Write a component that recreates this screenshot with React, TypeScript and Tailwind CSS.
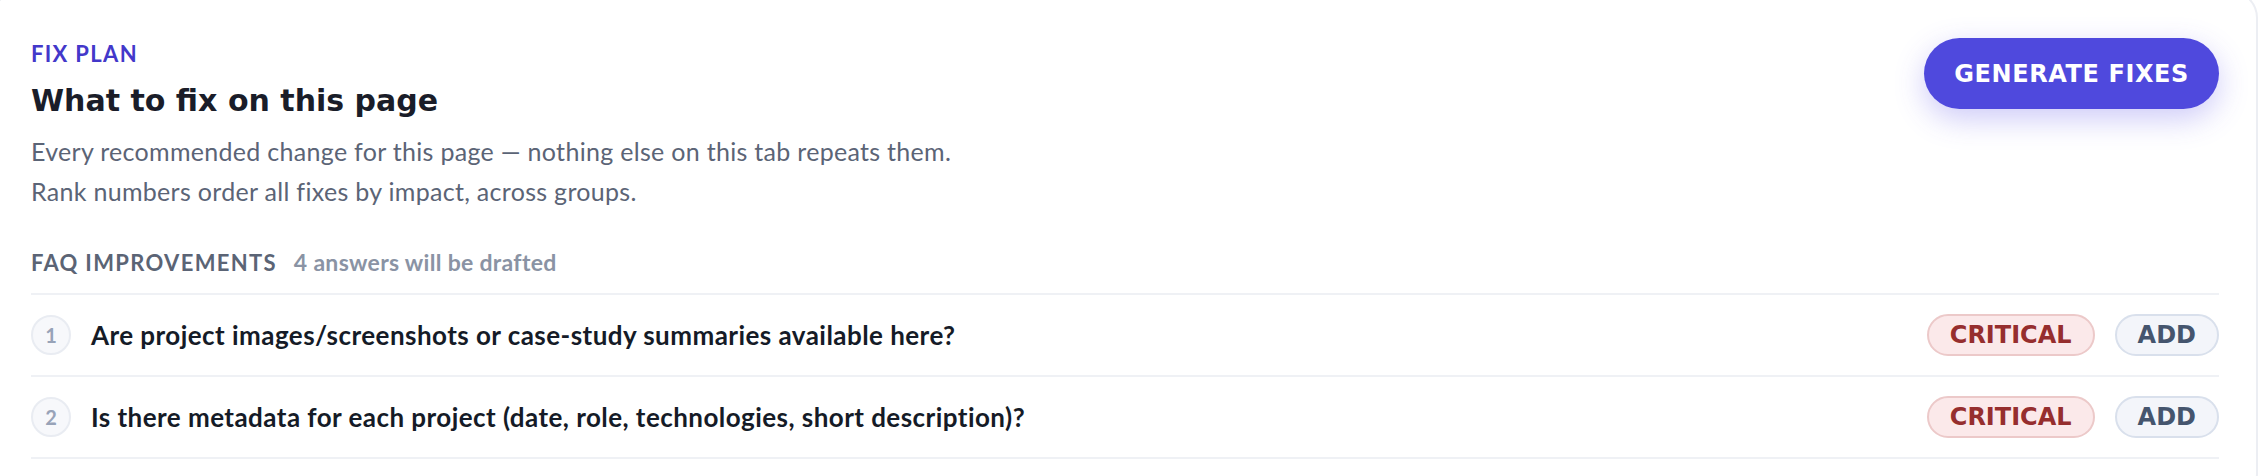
const questions = [
  {
    rank: 1,
    text: 'Are project images/screenshots or case-study summaries available here?',
    priority: 'critical',
    action: 'ADD',
  },
  {
    rank: 2,
    text: 'Is there metadata for each project (date, role, technologies, short description)?',
    priority: 'critical',
    action: 'ADD',
  },
];

const priorityStyles: Record<string, string> = {
  critical: 'bg-[#fbe9ea] border-[#ecc9c9] text-[#962e2e]',
  important: 'bg-[#fdf4e3] border-[#f0dcb8] text-[#946015]',
};

const Badge = ({ label, className }: { label: string; className: string }) => (
  <span
    className={`flex h-[42px] items-center rounded-full border-2 px-[21px] font-['DejaVu_Sans',sans-serif] text-[24px] font-bold leading-none ${className}`}
  >
    {label}
  </span>
);

const App = () => {
  return (
    <div className="h-[476px] overflow-hidden bg-white">
      <div className="-ml-[8px] -mt-[10px] w-[calc(100%+8px)] rounded-[28px] border-2 border-[#eceef3] bg-white px-[37px] pt-[48px] pb-[40px]">
        <div className="flex items-start justify-between">
          <div>
            <p className="font-['Lato',sans-serif] text-[22px] font-bold uppercase leading-[28px] tracking-[0.06em] text-[#4338ca]">
              Fix plan
            </p>
            <h2 className="mt-[15px] font-['DejaVu_Sans',sans-serif] text-[30px] font-bold leading-[36px] text-[#1a1d29]">
              What to fix on this page
            </h2>
            <div className="mt-[12px] font-['Lato',sans-serif] text-[25px] leading-[40px] tracking-[0.3px] text-[#5b6476]">
              <p>Every recommended change for this page — nothing else on this tab repeats them.</p>
              <p>Rank numbers order all fixes by impact, across groups.</p>
            </div>
          </div>
          <button className="-mt-[2px] h-[71px] rounded-full bg-[#4f49dd] px-[30px] font-['DejaVu_Sans',sans-serif] text-[24px] font-bold tracking-[0.6px] text-white shadow-[0_10px_30px_rgba(79,70,229,0.28)]">
            GENERATE FIXES
          </button>
        </div>

        <div className="mt-[37px]">
          <div className="flex items-baseline pb-[16px] font-['Lato',sans-serif] font-bold leading-[28px]">
            <span className="text-[22px] uppercase tracking-[0.06em] text-[#5b6475]">FAQ Improvements</span>
            <span className="ml-[17px] text-[23px] tracking-[0.3px] text-[#8a93a4]">4 answers will be drafted</span>
          </div>

          {questions.map((q) => (
            <div
              key={q.rank}
              className="flex h-[82px] items-center border-t-2 border-[#eff1f5] last:h-[84px] last:border-b-2"
            >
              <span className="flex h-[40px] w-[40px] shrink-0 items-center justify-center rounded-full border-2 border-[#e9ecf2] bg-[#f7f8fb] font-['Lato',sans-serif] text-[20px] font-bold text-[#98a3b8]">
                {q.rank}
              </span>
              <p className="ml-[20px] font-['Lato',sans-serif] text-[26px] font-bold leading-[34px] tracking-[0.45px] text-[#151b27]">
                {q.text}
              </p>
              <div className="ml-auto flex gap-[20px]">
                <Badge label={q.priority.toUpperCase()} className={priorityStyles[q.priority]} />
                <Badge label={q.action} className="bg-[#f3f5fa] border-[#d9e0ec] text-[#45556e]" />
              </div>
            </div>
          ))}
        </div>
      </div>
    </div>
  );
};

export default App;
